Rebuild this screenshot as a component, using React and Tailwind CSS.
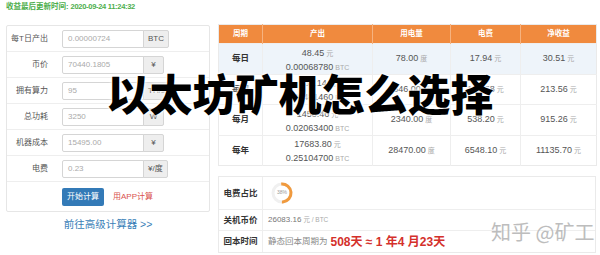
import React from 'react';

const inputs = [
  { label: '每T日产出', value: '0.00000724', unit: 'BTC' },
  { label: '币价', value: '70440.1805', unit: '¥' },
  { label: '拥有算力', value: '95', unit: 'TH/s' },
  { label: '总功耗', value: '3250', unit: 'W' },
  { label: '机器成本', value: '15495.00', unit: '¥' },
  { label: '电费', value: '0.23', unit: '¥/度' },
];

const periods = [
  { name: '每日', cny: '48.45', btc: '0.00068780', kwh: '78.00', fee: '17.94', net: '30.51' },
  { name: '每周', cny: '339.14', btc: '0.00481460', kwh: '546.00', fee: '125.58', net: '213.56' },
  { name: '每月', cny: '1453.46', btc: '0.02063400', kwh: '2340.00', fee: '538.20', net: '915.26' },
  { name: '每年', cny: '17683.80', btc: '0.25104700', kwh: '28470.00', fee: '6548.10', net: '11135.70' },
];

const Num = ({ value, unit }) => (
  <span className="whitespace-nowrap">
    <span className="text-[9px] text-[#555]">{value}</span>
    <span className="text-[7px] text-[#aaa] ml-[2px]">{unit}</span>
  </span>
);

const Donut = () => (
  <div className="relative w-[22px] h-[22px]">
    <svg width="22" height="22" viewBox="0 0 22 22">
      <circle cx="11" cy="11" r="9" fill="none" stroke="#f0f0f0" strokeWidth="3" />
      <circle
        cx="11"
        cy="11"
        r="9"
        fill="none"
        stroke="#f09a3e"
        strokeWidth="3"
        strokeDasharray="29 57"
        transform="rotate(-95 11 11)"
      />
    </svg>
    <span className="absolute inset-0 flex items-center justify-center text-[5px] text-[#999]">38%</span>
  </div>
);

export default function App() {
  return (
    <div className="relative w-[600px] h-[255px] overflow-hidden bg-white font-['Liberation_Sans','Noto_Sans_CJK_SC',sans-serif]">
      <div className="flex gap-[8px] pl-[6px]">
        {/* calculator */}
        <div className="w-[204px] flex flex-col">
          <div className="h-[14px] pt-[2px] text-[7.5px] leading-[10px] font-semibold text-[#4cae4c] whitespace-nowrap">
            收益最后更新时间: <span className="tracking-[-0.3px]">2020-09-24 11:24:32</span>
          </div>
          <div className="mt-[11px] border border-[#e6e6e6] rounded-[2px]">
            {inputs.map((row) => (
              <div key={row.label} className="flex items-center h-[26px] border-b border-[#eee]">
                <div className="w-[41px] text-right text-[8px] text-[#555]">{row.label}</div>
                <div className="ml-[14px] flex h-[18px]">
                  <div className="w-[82px] border border-[#d5d5d5] rounded-l-[2px] px-[5px] flex items-center text-[8px] text-[#aaa]">
                    {row.value}
                  </div>
                  <div className="min-w-[21px] px-[4px] -ml-px border border-[#d5d5d5] bg-[#eee] rounded-r-[2px] flex items-center justify-center text-[8px] text-[#555]">
                    {row.unit}
                  </div>
                </div>
              </div>
            ))}
            <div className="flex items-center h-[29px] pl-[55px] gap-[9px]">
              <button className="h-[18px] w-[42px] bg-[#337ab7] rounded-[2px] text-white text-[8px]">开始计算</button>
              <span className="text-[8px] text-[#d9534f]">用APP计算</span>
            </div>
          </div>
          <div className="mt-[5px] text-center text-[10.5px] text-[#3a7fb8]">前往高级计算器 &gt;&gt;</div>
        </div>

        {/* results */}
        <div className="w-[378px] pt-[24px] flex flex-col">
          <table className="w-full border-collapse table-fixed border border-[#eaeaea]">
            <colgroup>
              <col className="w-[44px]" />
              <col className="w-[110px]" />
              <col className="w-[78px]" />
              <col className="w-[70px]" />
              <col className="w-[76px]" />
            </colgroup>
            <thead>
              <tr className="h-[19px] bg-[#f08a3e] text-white text-[7.5px] font-semibold">
                <th className="border-r border-[#f6b27f]">周期</th>
                <th className="border-r border-[#f6b27f]">产出</th>
                <th className="border-r border-[#f6b27f]">用电量</th>
                <th className="border-r border-[#f6b27f]">电费</th>
                <th>净收益</th>
              </tr>
            </thead>
            <tbody>
              {periods.map((p, i) => (
                <tr key={p.name} className={`h-[30.5px] ${i === 0 ? 'bg-[#eef4fa]' : 'bg-white'} border-t border-[#eee]`}>
                  <td className="text-center text-[8.5px] font-semibold text-[#333] border-r border-[#eee]">{p.name}</td>
                  <td className="text-center border-r border-[#eee] leading-[11px]">
                    <div><Num value={p.cny} unit="元" /></div>
                    <div><Num value={p.btc} unit="BTC" /></div>
                  </td>
                  <td className="text-center align-top pt-[6px] border-r border-[#eee] leading-[11px]"><Num value={p.kwh} unit="度" /></td>
                  <td className="text-center align-top pt-[6px] border-r border-[#eee] leading-[11px]"><Num value={p.fee} unit="元" /></td>
                  <td className="text-center align-top pt-[6px] leading-[11px]"><Num value={p.net} unit="元" /></td>
                </tr>
              ))}
            </tbody>
          </table>

          <div className="mt-[10px] border border-[#eaeaea] flex flex-col">
            <div className="flex h-[33px] border-b border-[#eee]">
              <div className="w-[44px] border-r border-[#eee] flex items-center justify-center text-[8.5px] font-semibold text-[#333]">电费占比</div>
              <div className="flex items-center pl-[8px]">
                <Donut />
              </div>
            </div>
            <div className="flex h-[21px] border-b border-[#eee]">
              <div className="w-[44px] border-r border-[#eee] flex items-center justify-center text-[8.5px] font-semibold text-[#333]">关机币价</div>
              <div className="flex items-center pl-[5px] text-[8px] text-[#777]">
                26083.16<span className="ml-[2px] text-[6.5px] text-[#aaa]">元 / BTC</span>
              </div>
            </div>
            <div className="flex h-[21px]">
              <div className="w-[44px] border-r border-[#eee] flex items-center justify-center text-[8.5px] font-semibold text-[#333]">回本时间</div>
              <div className="flex items-center pl-[5px] whitespace-nowrap">
                <span className="text-[8.5px] text-[#888]">静态回本周期为</span>
                <span className="ml-[3px] text-[12px] font-bold text-[#d4302b]">508天 ≈ 1 年4 月23天</span>
              </div>
            </div>
          </div>
        </div>
      </div>

      {/* overlay title */}
      <div className="absolute left-0 right-0 top-[68px] text-center text-[43px] leading-[48px] font-black text-black font-['Noto_Sans_CJK_SC',sans-serif] [text-shadow:0_0_2px_#fff,0_0_3px_#fff,0_0_4px_#fff]">
        以太坊矿机怎么选择
      </div>

      {/* watermark */}
      <div className="absolute left-[491px] top-[217px] text-[20px] text-[#bdbdbd] font-['Noto_Sans_CJK_SC',sans-serif] whitespace-nowrap">
        知乎 @矿工
      </div>
    </div>
  );
}
